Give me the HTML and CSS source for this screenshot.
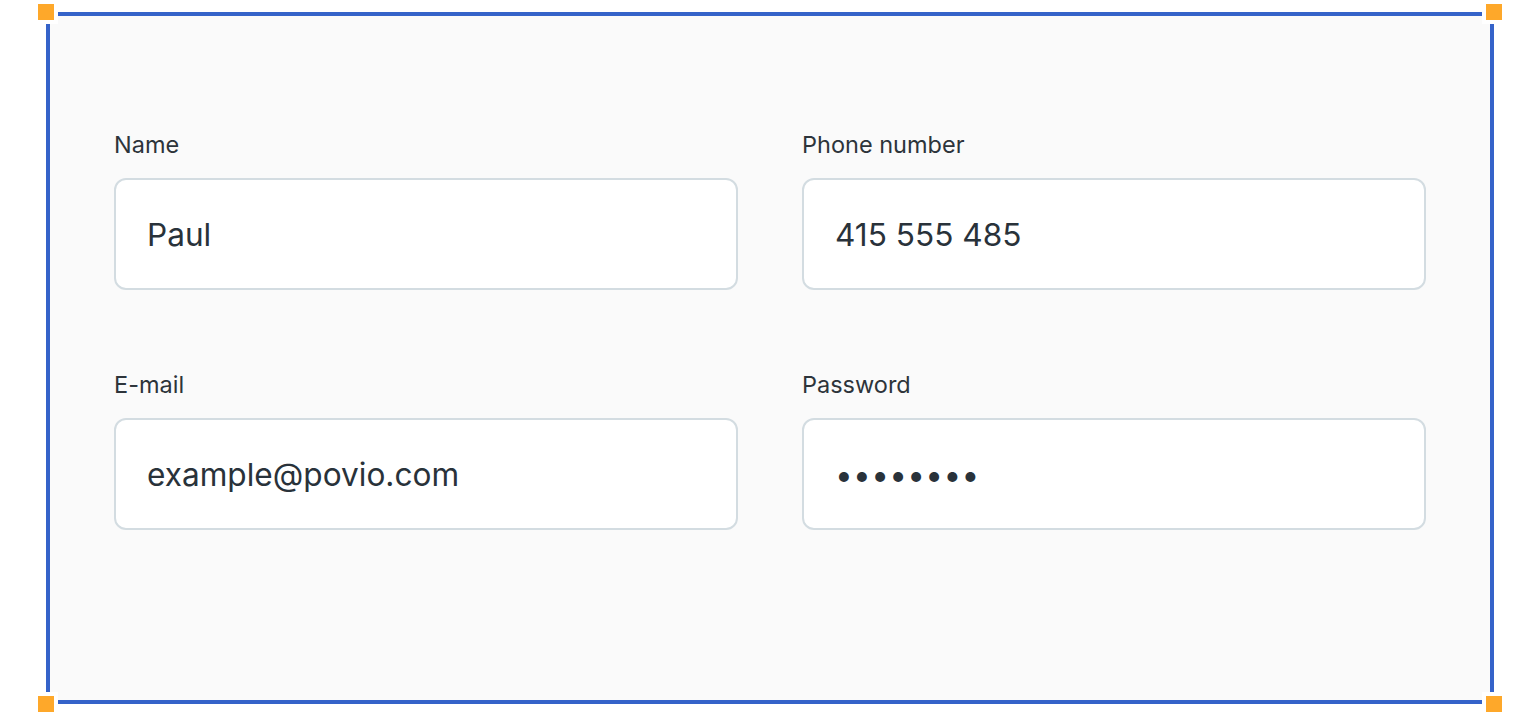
FILE: index.html
```html
<!DOCTYPE html>
<html>
<head>
<meta charset="utf-8" />
<title>Form</title>
<link rel="stylesheet" href="styles.css">
</head>
<body>
	<div class="frame">
		<span class="handle handle-tl"></span>
		<span class="handle handle-tr"></span>
		<span class="handle handle-bl"></span>
		<span class="handle handle-br"></span>
		<form class="form">
			<label class="field">
				<span class="field-label">Name</span>
				<input class="field-input" type="text" value="Paul" />
			</label>
			<label class="field">
				<span class="field-label">Phone number</span>
				<input class="field-input" type="text" value="415 555 485" />
			</label>
			<label class="field">
				<span class="field-label">E-mail</span>
				<input class="field-input" type="text" value="example@povio.com" />
			</label>
			<label class="field">
				<span class="field-label">Password</span>
				<input class="field-input field-password" type="password" value="12345678" />
			</label>
		</form>
	</div>
</body>
</html>
```

FILE: styles.css
```css
body{
	margin:0;
	padding:12px 46px;
	background:#ffffff;
	font-family:Inter, "Noto Sans", sans-serif;
	color:#29323a;
}

.frame{
	position:relative;
	width:1440px;
	height:684px;
	border:4px solid #3563c9;
	background:#fafafa;
}

/* resize handles on the corners */
.handle{
	position:absolute;
	width:16px;
	height:16px;
	background:#fea82a;
	border:4px solid #ffffff;
}
.handle-tl{ left:-16px; top:-16px; }
.handle-tr{ right:-16px; top:-16px; }
.handle-bl{ left:-16px; bottom:-16px; }
.handle-br{ right:-16px; bottom:-16px; }

.form{
	display:grid;
	grid-template-columns:624px 624px;
	column-gap:64px;
	row-gap:81px;
	padding:115px 64px 0;
}

.field{
	display:flex;
	flex-direction:column;
	gap:19px;
}

.field-label{
	font-size:23.5px;
	line-height:28px;
	color:#2d343a;
}

.field-input{
	box-sizing:border-box;
	height:112px;
	padding:0 31px;
	border:2px solid #d3dce1;
	border-radius:12px;
	background:#ffffff;
	font-family:Inter, "Noto Sans", sans-serif;
	font-size:31.6px;
	color:#29323a;
	outline:none;
}

.field-password{
	letter-spacing:0.3px;
}
```
